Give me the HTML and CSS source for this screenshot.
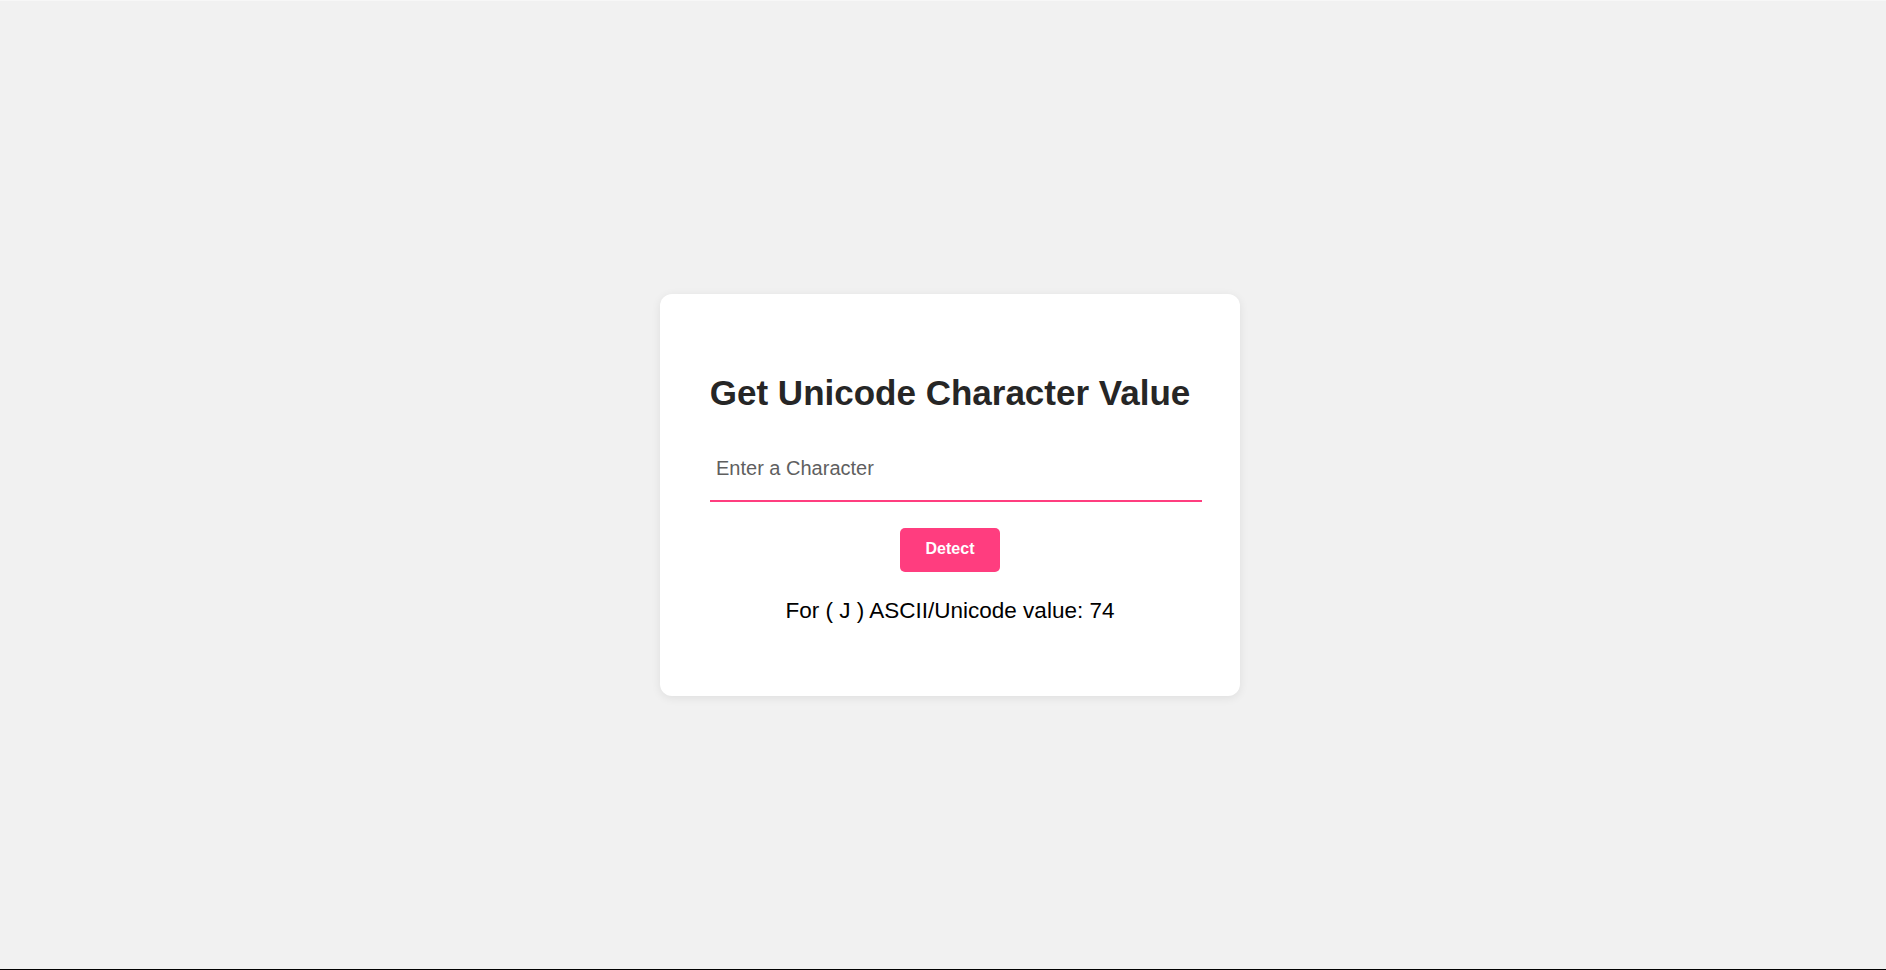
FILE: index.html
```html
<!DOCTYPE html>
<html lang="en">
<head>
<meta charset="utf-8">
<title>Get Unicode Character Value</title>
<link rel="stylesheet" href="styles.css">
</head>
<body>
<main class="page">
  <section class="card">
    <h1 class="title">Get Unicode Character Value</h1>
    <input class="char-input" type="text" placeholder="Enter a Character">
    <button class="detect-btn" type="button">Detect</button>
    <p class="result">For ( J ) ASCII/Unicode value: 74</p>
  </section>
</main>
</body>
</html>
```

FILE: styles.css
```css
* { box-sizing: border-box; }
html, body { margin: 0; padding: 0; }
html { height: 970px; overflow: hidden; }
body {
  background: #f1f1f1;
  font-family: "Liberation Sans", Arial, sans-serif;
  height: 970px;
  border-top: 1px solid #f7f7f7;
  border-bottom: 1px solid #000;
  overflow: hidden;
}
.page {
  display: flex;
  justify-content: center;
  padding-top: 293px;
  padding-left: 14px;
}
.card {
  width: 580px;
  height: 402px;
  background: #fff;
  border-radius: 12px;
  box-shadow: 0 2px 10px rgba(0,0,0,0.08);
  display: flex;
  flex-direction: column;
  align-items: center;
  padding: 79px 50px 0 50px;
}
.title {
  margin: 0;
  font-size: 35px;
  font-weight: bold;
  color: #262626;
  line-height: 40px;
  white-space: nowrap;
}
.char-input {
  box-sizing: content-box;
  align-self: flex-start;
  margin-top: 24px;
  width: 480px;
  padding: 20px 6px 20px 6px;
  font-family: "Liberation Sans", Arial, sans-serif;
  font-size: 20px;
  line-height: 23px;
  height: 23px;
  border: none;
  border-bottom: 2px solid #ff3d7f;
  outline: none;
  background: transparent;
  color: #222;
}
.char-input::placeholder { color: #5f5f5f; }
.detect-btn {
  margin-top: 26px;
  width: 100px;
  height: 44px;
  background: #ff3d7f;
  color: #fff;
  border: none;
  border-radius: 5px;
  font-family: "Liberation Sans", Arial, sans-serif;
  font-weight: bold;
  font-size: 16px;
  padding: 0 0 2px 0;
}
.result {
  margin: 26px 0 0 0;
  font-size: 22.5px;
  line-height: 25.5px;
  color: #000;
  white-space: nowrap;
}
```
